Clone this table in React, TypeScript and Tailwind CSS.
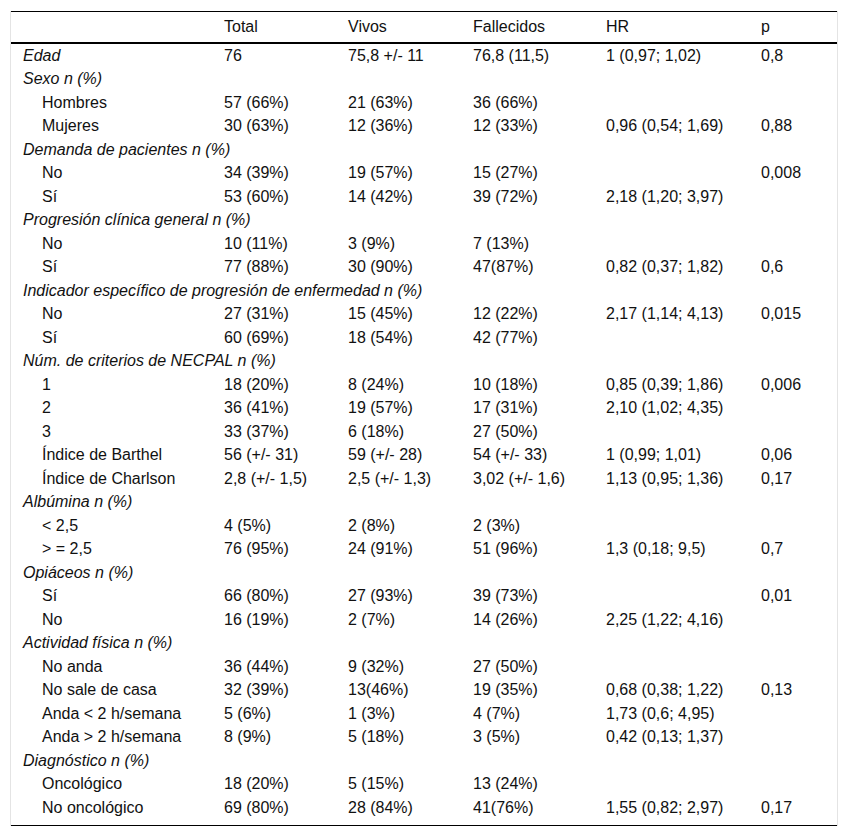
import React from "react";

type Row = {
  label: string;
  head?: boolean;
  cells?: string[];
};

const rows: Row[] = [
  { label: "Edad", head: true, cells: ["76", "75,8 +/- 11", "76,8 (11,5)", "1 (0,97; 1,02)", "0,8"] },
  { label: "Sexo n (%)", head: true },
  { label: "Hombres", cells: ["57 (66%)", "21 (63%)", "36 (66%)", "", ""] },
  { label: "Mujeres", cells: ["30 (63%)", "12 (36%)", "12 (33%)", "0,96 (0,54; 1,69)", "0,88"] },
  { label: "Demanda de pacientes n (%)", head: true },
  { label: "No", cells: ["34 (39%)", "19 (57%)", "15 (27%)", "", "0,008"] },
  { label: "Sí", cells: ["53 (60%)", "14 (42%)", "39 (72%)", "2,18 (1,20; 3,97)", ""] },
  { label: "Progresión clínica general n (%)", head: true },
  { label: "No", cells: ["10 (11%)", "3 (9%)", "7 (13%)", "", ""] },
  { label: "Sí", cells: ["77 (88%)", "30 (90%)", "47(87%)", "0,82 (0,37; 1,82)", "0,6"] },
  { label: "Indicador específico de progresión de enfermedad n (%)", head: true },
  { label: "No", cells: ["27 (31%)", "15 (45%)", "12 (22%)", "2,17 (1,14; 4,13)", "0,015"] },
  { label: "Sí", cells: ["60 (69%)", "18 (54%)", "42 (77%)", "", ""] },
  { label: "Núm. de criterios de NECPAL n (%)", head: true },
  { label: "1", cells: ["18 (20%)", "8 (24%)", "10 (18%)", "0,85 (0,39; 1,86)", "0,006"] },
  { label: "2", cells: ["36 (41%)", "19 (57%)", "17 (31%)", "2,10 (1,02; 4,35)", ""] },
  { label: "3", cells: ["33 (37%)", "6 (18%)", "27 (50%)", "", ""] },
  { label: "Índice de Barthel", cells: ["56 (+/- 31)", "59 (+/- 28)", "54 (+/- 33)", "1 (0,99; 1,01)", "0,06"] },
  { label: "Índice de Charlson", cells: ["2,8 (+/- 1,5)", "2,5 (+/- 1,3)", "3,02 (+/- 1,6)", "1,13 (0,95; 1,36)", "0,17"] },
  { label: "Albúmina n (%)", head: true },
  { label: "< 2,5", cells: ["4 (5%)", "2 (8%)", "2 (3%)", "", ""] },
  { label: "> = 2,5", cells: ["76 (95%)", "24 (91%)", "51 (96%)", "1,3 (0,18; 9,5)", "0,7"] },
  { label: "Opiáceos n (%)", head: true },
  { label: "Sí", cells: ["66 (80%)", "27 (93%)", "39 (73%)", "", "0,01"] },
  { label: "No", cells: ["16 (19%)", "2 (7%)", "14 (26%)", "2,25 (1,22; 4,16)", ""] },
  { label: "Actividad física n (%)", head: true },
  { label: "No anda", cells: ["36 (44%)", "9 (32%)", "27 (50%)", "", ""] },
  { label: "No sale de casa", cells: ["32 (39%)", "13(46%)", "19 (35%)", "0,68 (0,38; 1,22)", "0,13"] },
  { label: "Anda < 2 h/semana", cells: ["5 (6%)", "1 (3%)", "4 (7%)", "1,73 (0,6; 4,95)", ""] },
  { label: "Anda > 2 h/semana", cells: ["8 (9%)", "5 (18%)", "3 (5%)", "0,42 (0,13; 1,37)", ""] },
  { label: "Diagnóstico n (%)", head: true },
  { label: "Oncológico", cells: ["18 (20%)", "5 (15%)", "13 (24%)", "", ""] },
  { label: "No oncológico", cells: ["69 (80%)", "28 (84%)", "41(76%)", "1,55 (0,82; 2,97)", "0,17"] },
];

const headers = ["Total", "Vivos", "Fallecidos", "HR", "p"];

const grid = "grid grid-cols-[203px_124px_125px_133px_155px_86px]";

export default function App() {
  return (
    <div className="min-h-[837px] bg-white pt-[11px] text-[16px] leading-[20px] text-[#111] [font-family:'Liberation_Sans',Arial,sans-serif]">
      <div className="ml-[10px] w-[828px] border-x border-[#e4e4e4]">
        {/* header */}
        <div className={`${grid} h-[33px] border-t border-b-2 border-black items-center`}>
          <div />
          {headers.map((h) => (
            <div key={h} className="pl-[10px] whitespace-nowrap">
              {h}
            </div>
          ))}
        </div>

        {/* body */}
        <div className="pb-[5px] border-b border-black">
          {rows.map((row, i) => (
            <div key={i} className={`${grid} h-[23.5px] items-center`}>
              <div
                className={
                  row.head
                    ? "pl-[12px] italic whitespace-nowrap"
                    : "pl-[31px] whitespace-nowrap"
                }
              >
                {row.label}
              </div>
              {row.cells?.map((c, j) => (
                <div key={j} className="pl-[10px] whitespace-nowrap">
                  {c}
                </div>
              ))}
            </div>
          ))}
        </div>
      </div>
    </div>
  );
}
